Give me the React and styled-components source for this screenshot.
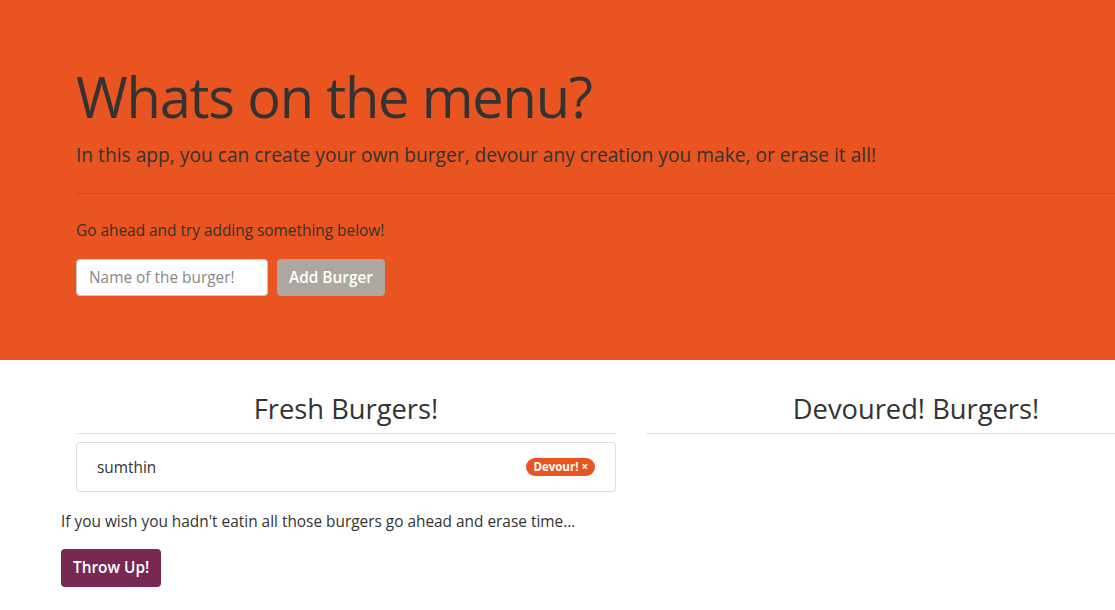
import styled, { createGlobalStyle } from 'styled-components'

const GlobalStyle = createGlobalStyle`
  html, body {
    margin: 0;
    padding: 0;
    background: #fff;
    overflow-x: hidden;
  }
  body {
    font-family: "Open Sans", "Noto Sans", sans-serif;
    color: #333;
    font-size: 15.4px;
  }
  * {
    box-sizing: border-box;
  }
`

const Jumbotron = styled.header`
  background: #e95420;
  height: 360px;
  padding: 63px 0 0 76px;
`

const Inner = styled.div`
  width: 1125px;
`

const Title = styled.h1`
  margin: 0;
  font-size: 56px;
  letter-spacing: -1.2px;
  font-weight: 400;
  line-height: 1.2;
  color: #333;
`

const Lead = styled.p`
  margin: 12px 0 0;
  font-size: 19.2px;
  line-height: 1.4;
  color: #333;
`

const Rule = styled.hr`
  margin: 24px 0 0;
  border: 0;
  border-top: 1px solid ${(p) => p.$color || '#eee'};
`

const Note = styled.p`
  margin: ${(p) => p.$margin || '0'};
  font-size: 15.4px;
  line-height: 1.4;
`

const Form = styled.form`
  display: flex;
  gap: 9px;
  margin-top: 17px;
`

const Input = styled.input`
  width: 192px;
  height: 37px;
  border: 1px solid #ccc;
  border-radius: 4px;
  padding: 6px 12px;
  font-family: inherit;
  font-size: 15.4px;
  color: #333;
  &::placeholder {
    color: #888;
  }
`

const Button = styled.button`
  height: ${(p) => p.$height || '37px'};
  margin-top: ${(p) => p.$top || '0'};
  padding: 0 12px;
  border: 0;
  border-radius: 4px;
  background: ${(p) => p.$bg};
  color: #fff;
  font-family: inherit;
  font-size: 15.4px;
  font-weight: 600;
  cursor: pointer;
`

const Row = styled.main`
  display: grid;
  grid-template-columns: 570px 570px;
  padding: 32px 0 0 61px;
`

const Column = styled.section``

const Block = styled.div`
  margin-left: 15px;
  width: 540px;
`

const Heading = styled.h2`
  margin: 0;
  text-align: center;
  font-size: 27.3px;
  font-weight: 400;
  line-height: 1.25;
  padding-bottom: 7px;
  border-bottom: 1px solid #e3e3e3;
`

const List = styled.ul`
  list-style: none;
  margin: 8px 0 0;
  padding: 0;
`

const Item = styled.li`
  display: flex;
  align-items: center;
  justify-content: space-between;
  height: 50px;
  padding: 0 20px;
  border: 1px solid #ddd;
  border-radius: 4px;
  font-size: 15.4px;
`

const Badge = styled.span`
  background: #e95420;
  color: #fff;
  font-size: 11.5px;
  font-weight: 700;
  line-height: 18px;
  padding: 0 7px;
  border-radius: 10px;
`

export default function App() {
  return (
    <>
      <GlobalStyle />
      <Jumbotron>
        <Inner>
          <Title>Whats on the menu?</Title>
          <Lead>
            In this app, you can create your own burger, devour any creation you make, or erase it all!
          </Lead>
          <Rule $color="#d44b1a" />
          <Note $margin="26px 0 0">Go ahead and try adding something below!</Note>
          <Form onSubmit={(e) => e.preventDefault()}>
            <Input placeholder="Name of the burger!" />
            <Button type="submit" $bg="#aea79f">Add Burger</Button>
          </Form>
        </Inner>
      </Jumbotron>
      <Row>
        <Column>
          <Block>
            <Heading>Fresh Burgers!</Heading>
            <List>
              <Item>
                <span>sumthin</span>
                <Badge>Devour! ×</Badge>
              </Item>
            </List>
          </Block>
          <Note $margin="19px 0 0">
            If you wish you hadn't eatin all those burgers go ahead and erase time...
          </Note>
          <Button type="button" $bg="#772953" $height="38px" $top="16px">
            Throw Up!
          </Button>
        </Column>
        <Column>
          <Block>
            <Heading>Devoured! Burgers!</Heading>
          </Block>
        </Column>
      </Row>
    </>
  )
}
